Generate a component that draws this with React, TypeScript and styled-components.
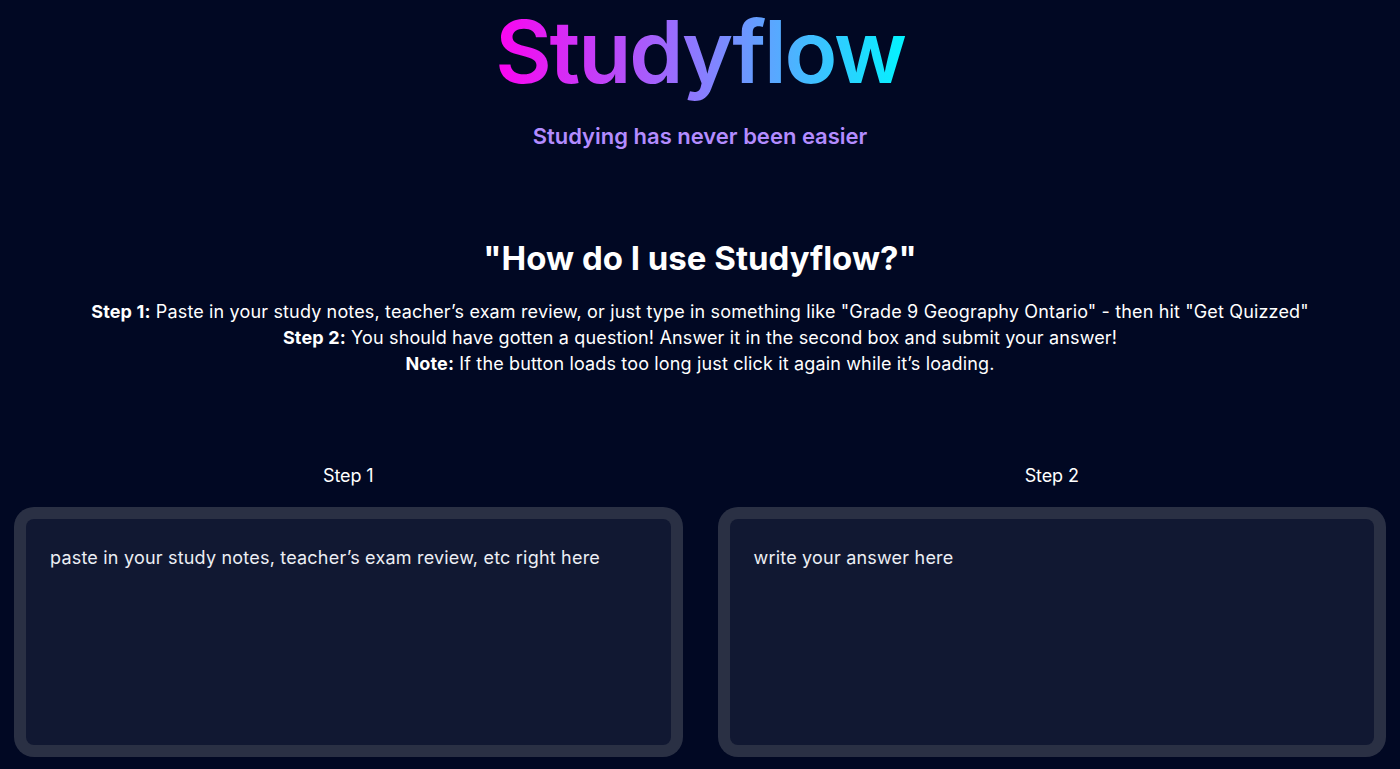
import React from "react";
import styled, { createGlobalStyle } from "styled-components";

const Global = createGlobalStyle`
  html, body {
    margin: 0;
    padding: 0;
    background: #010823;
    font-family: Inter, "Noto Sans", sans-serif;
    color: #ffffff;
  }
  * { box-sizing: border-box; }
`;

const Page = styled.main`
  min-height: 769px;
  display: flex;
  flex-direction: column;
  align-items: center;
  padding: 8px 14px 12px;
`;

const Title = styled.h1`
  margin: 0;
  padding: 0 4px 8px;
  font-size: 87px;
  line-height: 88px;
  font-weight: 600;
  letter-spacing: -2.2px;
  background: linear-gradient(90deg, #ff00f0 0%, #8a7cff 50%, #00f6ff 100%);
  -webkit-background-clip: text;
  background-clip: text;
  color: transparent;
`;

const Subtitle = styled.p`
  margin: 19px 0 0;
  font-size: 22px;
  line-height: 26px;
  font-weight: 600;
  color: #b38cff;
`;

const Heading = styled.h2`
  margin: 89px 0 0;
  font-size: 33px;
  line-height: 40px;
  font-weight: 700;
`;

const Steps = styled.div`
  margin-top: 21px;
  text-align: center;
  font-size: 18px;
  line-height: 26px;
  font-weight: 400;
  letter-spacing: 0.15px;
`;

const Line = styled.div``;

const Strong = styled.strong`
  font-weight: 700;
`;

const Boxes = styled.section`
  width: 100%;
  margin-top: 87px;
  display: grid;
  grid-template-columns: 1fr 1fr;
  gap: 35px;
`;

const Column = styled.div`
  display: flex;
  flex-direction: column;
  align-items: center;
`;

const Label = styled.div`
  font-size: 18px;
  line-height: 24px;
  margin-bottom: 19px;
  letter-spacing: -0.1px;
`;

const Frame = styled.div`
  width: 100%;
  height: 250px;
  padding: 12px;
  border-radius: 20px;
  background: #2a3044;
`;

const Area = styled.textarea`
  width: 100%;
  height: 100%;
  resize: none;
  border: none;
  outline: none;
  border-radius: 8px;
  background: #111832;
  color: #eceef4;
  font-family: inherit;
  font-size: 18px;
  line-height: 24px;
  letter-spacing: 0.2px;
  padding: 27px 24px;
  &::placeholder {
    color: #eceef4;
    opacity: 1;
  }
`;

export default function App() {
  return (
    <>
      <Global />
      <Page>
        <Title>Studyflow</Title>
        <Subtitle>Studying has never been easier</Subtitle>
        <Heading>"How do I use Studyflow?"</Heading>
        <Steps>
          <Line>
            <Strong>Step 1:</Strong> Paste in your study notes, teacher’s exam review, or just type in something like "Grade 9 Geography Ontario" - then hit "Get Quizzed"
          </Line>
          <Line>
            <Strong>Step 2:</Strong> You should have gotten a question! Answer it in the second box and submit your answer!
          </Line>
          <Line>
            <Strong>Note:</Strong> If the button loads too long just click it again while it’s loading.
          </Line>
        </Steps>
        <Boxes>
          <Column>
            <Label>Step 1</Label>
            <Frame>
              <Area placeholder="paste in your study notes, teacher’s exam review, etc right here" />
            </Frame>
          </Column>
          <Column>
            <Label>Step 2</Label>
            <Frame>
              <Area placeholder="write your answer here" />
            </Frame>
          </Column>
        </Boxes>
      </Page>
    </>
  );
}
